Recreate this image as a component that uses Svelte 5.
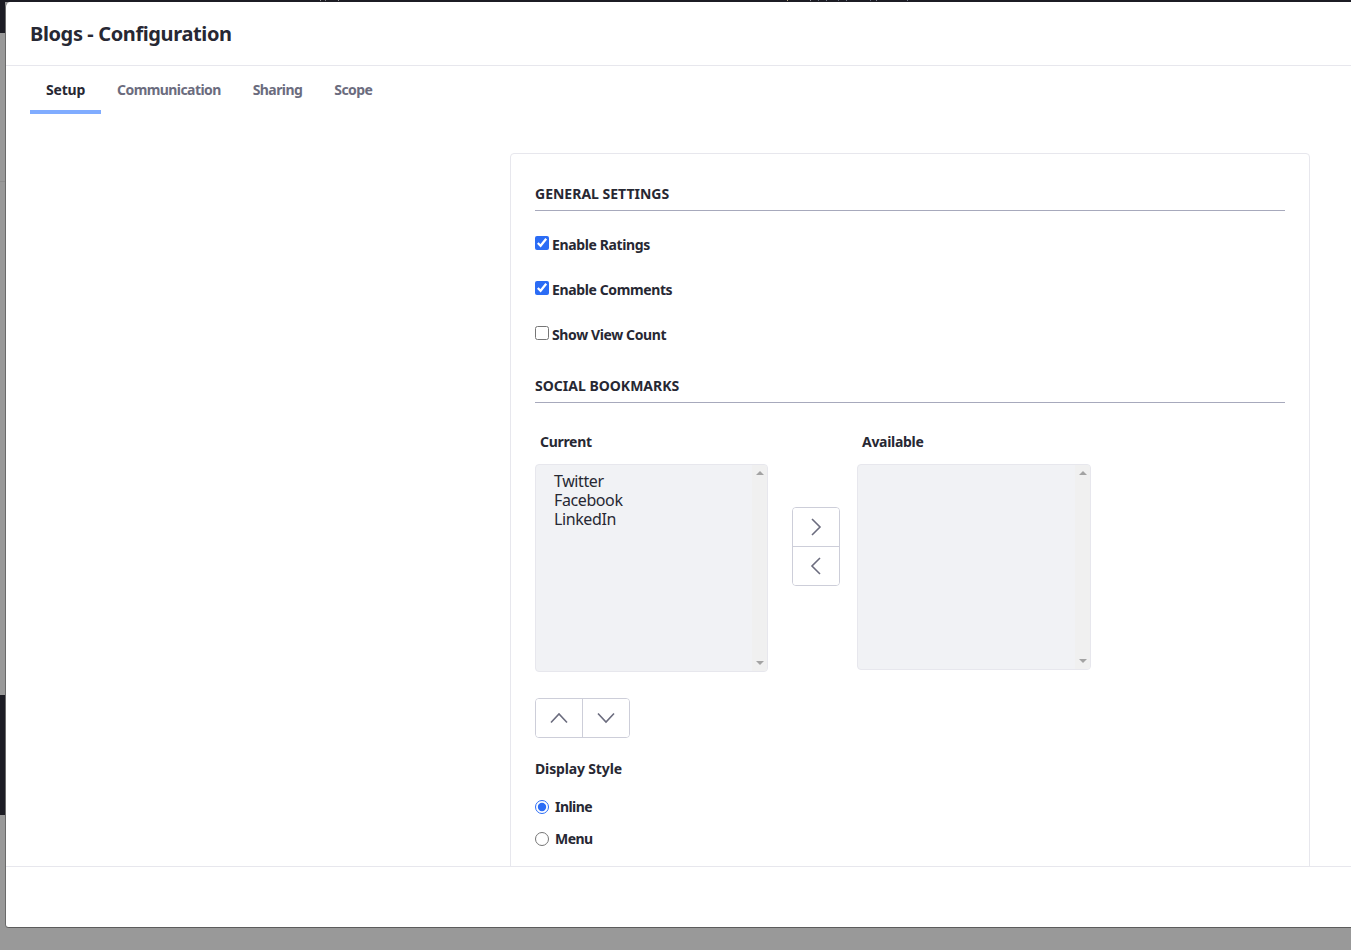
<script>
	let current = ['Twitter', 'Facebook', 'LinkedIn'];
	let checks = [
		{ label: 'Enable Ratings', on: true },
		{ label: 'Enable Comments', on: true },
		{ label: 'Show View Count', on: false }
	];
	let tabs = ['Setup', 'Communication', 'Sharing', 'Scope'];
	let style = 'inline';
	// stray pixels of the page behind the modal, peeking over its top edge
	let ticks = [
		[320, '#8f8f92'], [325, '#77777c'], [338, '#8f8f92'],
		[787, '#b5a67c'], [810, '#8a8a96'], [818, '#5c6478'], [826, '#6d7484'],
		[838, '#5c6478'], [846, '#6d7484'], [870, '#5c6478'], [876, '#77798a'], [907, '#6d7484']
	];
</script>

<div class="page">
	<div class="topbar">
		{#each ticks as [x, color]}
			<i style="left: {x}px; background: {color}"></i>
		{/each}
	</div>
	<div class="row">
		<div class="rail">
			<div class="dark first"></div>
			<div class="gray one"></div>
			<div class="gray two"></div>
			<div class="dark second"></div>
		</div>
		<div class="modal">
			<header>
				<h1>Blogs - Configuration</h1>
			</header>
			<div class="body">
				<nav>
					{#each tabs as tab, i}
						<a href="#{tab}" class:active={i === 0}>{tab}</a>
					{/each}
				</nav>
				<section class="sheet">
					<h2>GENERAL SETTINGS</h2>
					<div class="checks">
						{#each checks as c}
							<label class="check">
								<input type="checkbox" checked={c.on} />
								<span>{c.label}</span>
							</label>
						{/each}
					</div>

					<h2 class="second-head">SOCIAL BOOKMARKS</h2>
					<div class="selector">
						<div class="col left">
							<div class="cap">Current</div>
							<div class="listbox">
								<select multiple class="tall">
									{#each current as o}
										<option>{o}</option>
									{/each}
								</select>
								<div class="track"><b class="up"></b><b class="down"></b></div>
							</div>
						</div>
						<div class="move">
							<button aria-label="Move right">
								<svg width="12" height="18" viewBox="0 0 12 18"><path d="M2 1 L10 9 L2 17" /></svg>
							</button>
							<button aria-label="Move left">
								<svg width="12" height="18" viewBox="0 0 12 18"><path d="M10 1 L2 9 L10 17" /></svg>
							</button>
						</div>
						<div class="col">
							<div class="cap">Available</div>
							<div class="listbox">
								<select multiple class="short"></select>
								<div class="track"><b class="up"></b><b class="down"></b></div>
							</div>
						</div>
					</div>
					<div class="order">
						<button aria-label="Move up">
							<svg width="18" height="12" viewBox="0 0 18 12"><path d="M1 10.5 L9 2 L17 10.5" /></svg>
						</button>
						<button aria-label="Move down">
							<svg width="18" height="12" viewBox="0 0 18 12"><path d="M1 1.5 L9 10 L17 1.5" /></svg>
						</button>
					</div>
					<div class="style-title">Display Style</div>
					<label class="radio">
						<input type="radio" bind:group={style} value="inline" />
						<span>Inline</span>
					</label>
					<label class="radio">
						<input type="radio" bind:group={style} value="menu" />
						<span>Menu</span>
					</label>
				</section>
			</div>
			<footer></footer>
		</div>
	</div>
</div>

<style>
	:global(body) {
		margin: 0;
		background: #999;
		font-family: "Noto Sans", "Open Sans", sans-serif;
		color: #272833;
	}

	.page {
		height: 950px;
		overflow: hidden;
		display: flex;
		flex-direction: column;
	}

	.topbar {
		position: relative;
		height: 2px;
		flex: none;
		background: #1c1c24;
	}

	.topbar i {
		position: absolute;
		top: 0;
		width: 1px;
		height: 1px;
	}

	.row {
		display: flex;
		height: 926px;
	}

	.rail {
		width: 5px;
		flex: none;
		display: flex;
		flex-direction: column;
	}

	.dark {
		background: #1c1c24;
	}

	.first {
		height: 31px;
	}

	.one {
		height: 148px;
		border-bottom: 1px solid #8d8d8d;
	}

	.two {
		height: 513px;
	}

	.second {
		height: 120px;
	}

	.modal {
		flex: 1;
		min-width: 0;
		display: flex;
		flex-direction: column;
		background: #fff;
		border-left: 1px solid #6a6a6a;
		border-bottom: 1px solid #5c5c5c;
		border-radius: 5px 0 0 4px;
	}

	header {
		height: 63px;
		flex: none;
		display: flex;
		align-items: center;
		padding: 0 24px;
		border-bottom: 1px solid #e7e7ed;
	}

	h1 {
		margin: 0;
		font-size: 20px;
		font-weight: 700;
		line-height: 1;
		letter-spacing: -0.38px;
	}

	.body {
		flex: 1;
		min-height: 0;
		overflow: hidden;
		padding: 0 41px 0 24px;
	}

	nav {
		display: flex;
		height: 48px;
	}

	nav a {
		padding: 16px 16px 0;
		font-size: 14px;
		line-height: 16px;
		font-weight: 700;
		letter-spacing: -0.58px;
		color: #6b6c7e;
		text-decoration: none;
		box-sizing: border-box;
	}

	nav a.active {
		color: #272833;
		letter-spacing: -0.2px;
		border-bottom: 4px solid #80acff;
	}

	.sheet {
		margin: 39px 0 0 480px;
		padding: 24px;
		border: 1px solid #e7e7ed;
		border-radius: 4px;
		height: 800px;
		box-sizing: border-box;
	}

	h2 {
		margin: 0;
		height: 33px;
		padding-top: 8px;
		box-sizing: border-box;
		font-size: 14px;
		line-height: 16px;
		font-weight: 700;
		border-bottom: 1px solid #a7a9bc;
	}

	.second-head {
		margin-top: 25px;
	}

	.checks {
		display: flex;
		flex-direction: column;
		gap: 25px;
		margin-top: 24px;
	}

	.check {
		display: flex;
		align-items: flex-start;
		gap: 3px;
		height: 20px;
		font-size: 14px;
		font-weight: 700;
		line-height: 20px;
		letter-spacing: -0.38px;
	}

	.check input {
		width: 14px;
		height: 14px;
		margin: 1px 0 0;
		accent-color: #2b6cf5;
	}

	.selector {
		display: flex;
		margin-top: 29px;
	}

	.col {
		width: 234px;
	}

	.left {
		width: 233px;
	}

	.cap {
		font-size: 14px;
		font-weight: 700;
		line-height: 20px;
		letter-spacing: -0.3px;
		padding-left: 5px;
		margin-bottom: 12px;
	}

	.listbox {
		position: relative;
	}

	select {
		display: block;
		width: 100%;
		padding: 5px 16px;
		background: #f1f2f5;
		border: 1px solid #e7e7ed;
		border-radius: 4px;
		box-sizing: border-box;
		font-family: inherit;
		font-size: 16px;
		line-height: 19px;
		letter-spacing: -0.4px;
		color: #272833;
		overflow: hidden;
		outline: none;
	}

	option {
		display: block;
		padding: 0 2px;
		height: 19px;
		min-height: 19px;
		line-height: 19px;
	}

	.tall {
		height: 208px;
	}

	.short {
		height: 206px;
	}

	.track {
		position: absolute;
		top: 1px;
		right: 1px;
		bottom: 1px;
		width: 15px;
		background: #f0f0f0;
		border-radius: 0 3px 3px 0;
		display: flex;
		flex-direction: column;
		justify-content: space-between;
		align-items: center;
		padding: 6px 0;
		box-sizing: border-box;
	}

	.track b {
		width: 0;
		height: 0;
		border-left: 4px solid transparent;
		border-right: 4px solid transparent;
	}

	.track .up {
		border-bottom: 4px solid #a3a3a3;
	}

	.track .down {
		border-top: 4px solid #a3a3a3;
	}

	.move {
		display: flex;
		flex-direction: column;
		margin: 75px 17px 0 24px;
		width: 48px;
		flex: none;
		height: 79px;
		box-sizing: border-box;
		border: 1px solid #cdced9;
		border-radius: 4px;
		overflow: hidden;
	}

	button {
		flex: 1;
		display: flex;
		align-items: center;
		justify-content: center;
		background: #fff;
		border: 0;
		padding: 0;
	}

	.move button + button {
		border-top: 1px solid #cdced9;
	}

	svg path {
		fill: none;
		stroke: #6b6c7e;
		stroke-width: 1.6;
	}

	.order {
		display: flex;
		width: 95px;
		height: 40px;
		margin-top: 26px;
		box-sizing: border-box;
		border: 1px solid #cdced9;
		border-radius: 4px;
		overflow: hidden;
	}

	.order button + button {
		border-left: 1px solid #cdced9;
	}

	.style-title {
		margin-top: 21px;
		font-size: 14px;
		font-weight: 700;
		line-height: 20px;
		letter-spacing: -0.15px;
	}

	.radio {
		display: flex;
		align-items: center;
		gap: 6px;
		height: 20px;
		margin-top: 12px;
		font-size: 14px;
		font-weight: 700;
		letter-spacing: -0.55px;
	}

	.radio span {
		padding-bottom: 2px;
	}

	.style-title + .radio {
		margin-top: 18px;
	}

	.radio input {
		width: 14px;
		height: 14px;
		margin: 0;
		accent-color: #2b6cf5;
	}

	footer {
		height: 60px;
		flex: none;
		border-top: 1px solid #e7e7ed;
		background: #fff;
		border-radius: 0 0 0 4px;
	}
</style>
